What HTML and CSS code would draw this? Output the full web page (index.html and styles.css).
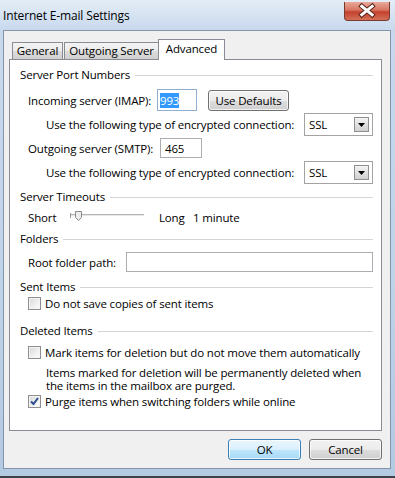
FILE: index.html
```html
<!DOCTYPE html>
<html lang="en">
<head>
    <meta charset="UTF-8">
    <title>Internet E-mail Settings</title>
    <link rel="stylesheet" href="styles.css">
</head>
<body>
    <div class="window">
        <div class="titlebar">
            <span class="title">Internet E-mail Settings</span>
            <span class="close">
                <svg width="46" height="19" viewBox="0 0 46 19">
                    <path d="M17.5 5 L28.5 14 M28.5 5 L17.5 14" stroke="#5b231b" stroke-width="5" stroke-linecap="square"/>
                    <path d="M17.5 5 L28.5 14 M28.5 5 L17.5 14" stroke="#ffffff" stroke-width="3" stroke-linecap="square"/>
                </svg>
            </span>
        </div>

        <div class="client">
            <div class="tabs">
                <div class="tab tab-general">General</div>
                <div class="tab tab-outgoing">Outgoing Server</div>
                <div class="tab tab-advanced active">Advanced</div>
            </div>

            <div class="panel">
                <div class="group-title">Server Port Numbers</div>
                <div class="row indent row-incoming">
                    <span class="label-in">Incoming server (IMAP):</span>
                    <span class="textbox port focused"><span class="selected">993</span></span>
                    <button class="btn btn-defaults">Use Defaults</button>
                </div>
                <div class="row deep row-enc1">
                    <span>Use the following type of encrypted connection:</span>
                    <span class="combo">
                        <span class="combo-text">SSL</span>
                        <span class="combo-arrow">
                            <svg width="7" height="4" viewBox="0 0 7 4"><path d="M0 0 H7 L3.5 4 Z" fill="#000"/></svg>
                        </span>
                    </span>
                </div>
                <div class="row indent row-outgoing">
                    <span class="label-out">Outgoing server (SMTP):</span>
                    <span class="textbox port port-out">465</span>
                </div>
                <div class="row deep row-enc2">
                    <span>Use the following type of encrypted connection:</span>
                    <span class="combo">
                        <span class="combo-text">SSL</span>
                        <span class="combo-arrow">
                            <svg width="7" height="4" viewBox="0 0 7 4"><path d="M0 0 H7 L3.5 4 Z" fill="#000"/></svg>
                        </span>
                    </span>
                </div>

                <div class="group-title gt-timeouts">Server Timeouts</div>
                <div class="row indent row-short">
                    <span class="short">Short</span>
                    <svg class="slider" width="74" height="16" viewBox="0 0 74 16">
                        <rect x="0" y="5" width="74" height="1" fill="#b4b4b4"/>
                        <rect x="0" y="6" width="74" height="1" fill="#e6e6e6"/>
                        <rect x="0" y="4" width="1" height="5" fill="#9a9a9a"/>
                        <path d="M5.5 2.5 H11.5 V8.5 L8.5 11.5 L5.5 8.5 Z" fill="#ececec" stroke="#8a8a8a"/>
                    </svg>
                    <span class="long">Long</span>
                    <span>1 minute</span>
                </div>

                <div class="group-title gt-folders">Folders</div>
                <div class="row indent row-root">
                    <span class="label-root">Root folder path:</span>
                    <span class="textbox root"></span>
                </div>

                <div class="group-title gt-sent">Sent Items</div>
                <div class="row indent check-row">
                    <span class="checkbox"></span>
                    <span>Do not save copies of sent items</span>
                </div>

                <div class="group-title gt-deleted">Deleted Items</div>
                <div class="row indent check-row row-mark">
                    <span class="checkbox"></span>
                    <span>Mark items for deletion but do not move them automatically</span>
                </div>
                <div class="note">Items marked for deletion will be permanently deleted when the items in the mailbox are purged.</div>
                <div class="row indent check-row row-purge">
                    <span class="checkbox checked">
                        <svg width="11" height="11" viewBox="0 0 11 11"><path d="M2 5.5 L4.5 8 L9 2" fill="none" stroke="#2c4a8e" stroke-width="2"/></svg>
                    </span>
                    <span>Purge items when switching folders while online</span>
                </div>
            </div>

            <div class="buttons">
                <button class="btn btn-default">OK</button>
                <button class="btn">Cancel</button>
            </div>
        </div>
    </div>
</body>
</html>
```

FILE: styles.css
```css
body {
    margin: 0;
    font-family: "Open Sans", "Noto Sans", sans-serif;
    font-size: 11.5px;
    letter-spacing: -0.15px;
    color: #000;
}

.window {
    width: 395px;
    height: 478px;
    box-sizing: border-box;
    display: flex;
    flex-direction: column;
    padding: 0 4px 7px 3px;
    border-bottom: 2px solid #3e4349;
    background: linear-gradient(180deg, #e4edf7 0, #c8d9ed 30px, #bfd3e9 60%, #b3cae3 100%);
}

.titlebar {
    height: 30px;
    display: flex;
    justify-content: space-between;
    align-items: flex-start;
}

.title {
    margin-top: 7px;
    line-height: 18px;
    font-size: 12px;
}

.close {
    margin-top: 2px;
    margin-right: 1px;
    width: 46px;
    height: 19px;
    box-sizing: border-box;
    border: 1px solid #7a3a30;
    border-top: none;
    border-radius: 0 0 4px 4px;
    background: linear-gradient(180deg, #e9aa9b 0, #d77562 45%, #c4402d 55%, #d3705a 100%);
    display: flex;
    justify-content: center;
    align-items: center;
}

.close svg {
    margin-top: -1px;
}

.client {
    flex: 1;
    box-sizing: border-box;
    border: 1px solid #8594a8;
    background: #f0f0f0;
    padding: 8px 8px 8px 5px;
    display: flex;
    flex-direction: column;
}

.tabs {
    display: flex;
    align-items: flex-end;
    height: 20px;
    padding-left: 3px;
}

.tab {
    height: 17px;
    box-sizing: border-box;
    border: 1px solid #898c95;
    border-bottom: none;
    background: linear-gradient(180deg, #f3f3f3 0, #ebebeb 50%, #dddddd 51%, #cfcfcf 100%);
    text-align: center;
    line-height: 16px;
}

.tab-general {
    width: 51px;
}

.tab-outgoing {
    width: 95px;
    margin-left: 1px;
}

.tab-advanced {
    width: 67px;
    margin-left: -1px;
}

.tab.active {
    position: relative;
    height: 21px;
    margin-bottom: -1px;
    background: #fff;
    line-height: 18px;
}

.panel {
    height: 372px;
    box-sizing: border-box;
    border: 1px solid #898c95;
    background: #fff;
    padding: 7px 8px 0 10px;
}

.group-title {
    display: flex;
    align-items: center;
    height: 16px;
    line-height: 16px;
    white-space: nowrap;
}

.group-title::after {
    content: "";
    flex: 1;
    margin-left: 5px;
    border-top: 1px solid #d5d5d5;
}

.gt-timeouts { margin-top: 5px; }
.gt-folders { margin-top: 6px; }
.gt-sent { margin-top: 7px; }
.gt-deleted { margin-top: 12px; }

.row {
    display: flex;
    align-items: center;
    white-space: nowrap;
}

.indent {
    margin-left: 8px;
}

.deep {
    margin-left: 26px;
}

.row-incoming {
    margin-top: 6px;
    height: 22px;
}

.label-in {
    width: 129px;
}

.label-out {
    width: 132px;
}

.row-enc1 {
    margin-top: 2px;
    height: 23px;
}

.row-outgoing {
    margin-top: 2px;
    height: 20px;
}

.row-enc2 {
    margin-top: 3px;
    height: 23px;
}

.textbox {
    box-sizing: border-box;
    border: 1px solid #abadb3;
    background: #fff;
    display: flex;
    align-items: center;
    padding-left: 2px;
    flex-shrink: 0;
}

.port {
    width: 40px;
    height: 22px;
}

.port-out {
    width: 42px;
    height: 20px;
    padding-left: 4px;
}

.focused {
    border-color: #8fb0d2;
}

.selected {
    background: #3399ff;
    color: #fff;
    line-height: 15px;
}

.btn {
    box-sizing: border-box;
    height: 21px;
    width: 73px;
    padding: 0;
    border: 1px solid #707070;
    border-radius: 3px;
    background: linear-gradient(180deg, #f2f2f2 0, #ebebeb 50%, #dddddd 51%, #cfcfcf 100%);
    font-family: inherit;
    font-size: 11.5px;
    letter-spacing: -0.15px;
    color: #000;
    box-shadow: inset 0 0 0 1px rgba(255, 255, 255, 0.7);
}

.btn-defaults {
    margin-left: 11px;
    width: 81px;
    height: 21px;
}

.btn-default {
    border-color: #3c7fb1;
    background: linear-gradient(180deg, #eaf6fd 0, #d9f0fc 50%, #bee6fd 51%, #a7d9f5 100%);
}

.combo {
    margin-left: auto;
    width: 69px;
    height: 23px;
    flex-shrink: 0;
    box-sizing: border-box;
    border: 1px solid #a3a3a3;
    background: #fff;
    display: flex;
    align-items: center;
    justify-content: space-between;
    padding: 0 3px 0 4px;
}

.combo-arrow {
    width: 15px;
    height: 15px;
    box-sizing: border-box;
    border: 1px solid #8e8f8f;
    background: linear-gradient(180deg, #f4f4f4 0, #e0e0e0 50%, #d0d0d0 100%);
    display: flex;
    align-items: center;
    justify-content: center;
}

.row-short {
    margin-top: 4px;
    height: 16px;
}

.short {
    width: 42px;
}

.slider {
    margin-right: 15px;
}

.long {
    width: 34px;
}

.row-root {
    margin-top: 5px;
    height: 20px;
}

.label-root {
    width: 98px;
}

.root {
    flex: 1;
    height: 20px;
}

.check-row {
    height: 16px;
}

.checkbox {
    width: 13px;
    height: 13px;
    flex-shrink: 0;
    box-sizing: border-box;
    border: 1px solid #8e8f8f;
    background: linear-gradient(135deg, #d8d8d8 0, #f4f4f4 70%, #fff 100%);
    box-shadow: inset 0 0 0 1px #f4f4f4;
    margin-right: 4px;
    display: flex;
    align-items: center;
    justify-content: center;
}

.row-mark {
    margin-top: 5px;
}

.note {
    margin: 6px 0 0 26px;
    line-height: 13px;
    width: 320px;
}

.row-purge {
    margin-top: 1px;
}

.buttons {
    margin-top: 8px;
    display: flex;
    justify-content: flex-end;
    gap: 8px;
}
```
